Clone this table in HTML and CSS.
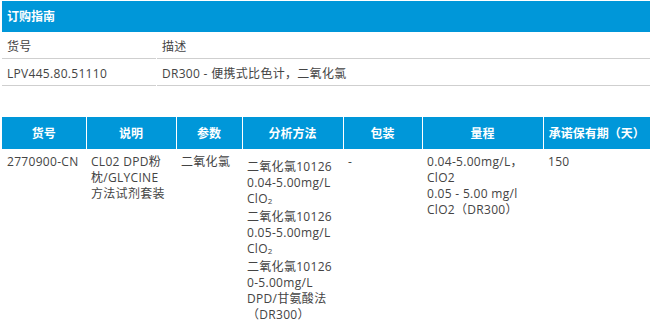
FILE: index.html
```html
<!DOCTYPE html>
<html lang="zh-CN">
<head>
<meta charset="utf-8">
<link rel="stylesheet" href="styles.css">
</head>
<body>
<div class="page">
  <section class="guide">
    <div class="guide-title">订购指南</div>
    <div class="guide-row">
      <div class="g-cell g-c1">货号</div>
      <div class="g-cell g-c2">描述</div>
    </div>
    <div class="guide-row">
      <div class="g-cell g-c1">LPV445.80.51110</div>
      <div class="g-cell g-c2">DR300 - 便携式比色计，二氧化氯</div>
    </div>
  </section>

  <table class="spec">
    <colgroup>
      <col class="w1"><col class="w2"><col class="w3"><col class="w4"><col class="w5"><col class="w6"><col class="w7">
    </colgroup>
    <thead>
      <tr>
        <th>货号</th>
        <th>说明</th>
        <th>参数</th>
        <th>分析方法</th>
        <th>包装</th>
        <th>量程</th>
        <th>承诺保有期（天）</th>
      </tr>
    </thead>
    <tbody>
      <tr>
        <td>2770900-CN</td>
        <td>CL02 DPD粉枕/GLYCINE<br>方法试剂套装</td>
        <td>二氧化氯</td>
        <td class="method">二氧化氯10126<br>0.04-5.00mg/L<br>ClO<span class="sub">2</span><br>二氧化氯10126<br>0.05-5.00mg/L<br>ClO<span class="sub">2</span><br>二氧化氯10126<br>0-5.00mg/L<br>DPD/甘氨酸法<br>（DR300）</td>
        <td>-</td>
        <td>0.04-5.00mg/L，<br>ClO2<br>0.05 - 5.00 mg/l<br>ClO2（DR300）</td>
        <td>150</td>
      </tr>
    </tbody>
  </table>
</div>
</body>
</html>
```

FILE: styles.css
```css
html, body {
  margin: 0;
  padding: 0;
  background: #fff;
}
body {
  font-family: "Open Sans", "Noto Sans CJK SC", sans-serif;
  font-size: 12px;
  color: #444;
  letter-spacing: 0.3px;
}
.page {
  padding: 1px 1px 0 2px;
}
.guide-title {
  background: #0097d9;
  color: #fff;
  font-weight: bold;
  height: 31px;
  line-height: 31px;
  padding-left: 5px;
  letter-spacing: 0;
}
.guide-row {
  display: flex;
  gap: 1px;
}
.g-cell {
  height: 26px;
  line-height: 30px;
  border-bottom: 1px solid #cfcfcf;
  padding-left: 5px;
}
.g-c1 {
  width: 149px;
}
.g-c2 {
  flex: 1;
}
.spec {
  margin-top: 31px;
  width: 648px;
  border-collapse: collapse;
  table-layout: fixed;
}
.w1 { width: 84px; }
.w2 { width: 90px; }
.w3 { width: 66px; }
.w4 { width: 101px; }
.w5 { width: 79px; }
.w6 { width: 121px; }
.w7 { width: 107px; }
.spec th {
  background: #0097d9;
  color: #fff;
  font-weight: bold;
  height: 32px;
  padding: 0;
  text-align: center;
  border-left: 1px solid #fff;
  white-space: nowrap;
  letter-spacing: 0;
}
.spec th:first-child {
  border-left: none;
}
.spec td {
  vertical-align: top;
  padding: 5px 5px 0 5px;
  line-height: 16px;
}
.spec td.method {
  padding-top: 10px;
}
.sub {
  font-size: 8px;
  vertical-align: -1px;
}
```
